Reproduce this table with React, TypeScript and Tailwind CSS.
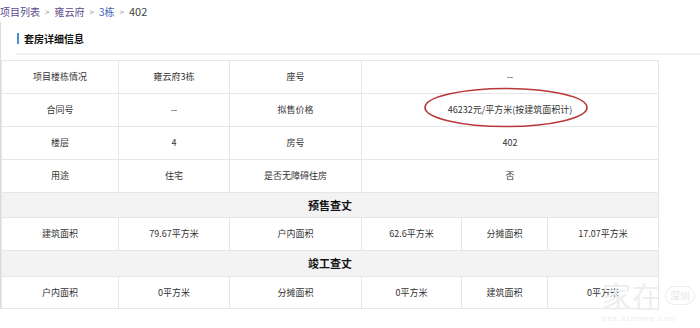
import React from 'react';

const cell = 'border border-[#e6e6e6] text-center align-middle text-[9px] text-[#333] font-normal';
const section = 'border border-[#e6e6e6] bg-[#f3f3f3] text-center align-middle text-[11px] font-bold text-[#111]';

const topRows: [string, string, string, string][] = [
  ['项目楼栋情况', '雍云府3栋', '座号', '--'],
  ['合同号', '--', '拟售价格', '46232元/平方米(按建筑面积计)'],
  ['楼层', '4', '房号', '402'],
  ['用途', '住宅', '是否无障碍住房', '否'],
];

const App: React.FC = () => {
  return (
    <div
      className="w-[700px] h-[328px] bg-white overflow-hidden relative"
      style={{ fontFamily: '"Microsoft YaHei", "Noto Sans CJK SC", "Noto Sans", sans-serif' }}
    >
      {/* breadcrumb */}
      <div className="h-[22px] flex items-center text-[10px] leading-none gap-[5px] pt-[1px]">
        <span className="text-[#5a4a8e]">项目列表</span>
        <span className="text-[#888] text-[8px]">&gt;</span>
        <span className="text-[#5a4a8e]">雍云府</span>
        <span className="text-[#888] text-[8px]">&gt;</span>
        <span className="text-[#3a62b8]">3栋</span>
        <span className="text-[#888] text-[8px]">&gt;</span>
        <span className="text-[#444] text-[11px]">402</span>
      </div>

      <div className="border-l border-[#dcdcdc]">
        <div className="h-[31px] flex items-center pl-[16px] pt-[1px]">
          <span className="w-[2px] h-[11px] bg-[#4a8fd3] mr-[5px]" />
          <span className="text-[10px] font-bold text-[#111]">套房详细信息</span>
        </div>
        <div className="ml-[15px] h-[2px] bg-[#efefef]" />

        <div className="relative mt-[5px] w-[657px]">
          <table className="w-[657px] table-fixed border-collapse">
            <colgroup>
              <col className="w-[117px]" />
              <col className="w-[111px]" />
              <col className="w-[132px]" />
              <col className="w-[100px]" />
              <col className="w-[86px]" />
              <col className="w-[111px]" />
            </colgroup>
            <tbody>
              {topRows.map((r, i) => (
                <tr key={i} className="h-[33px]">
                  <td className={cell}>{r[0]}</td>
                  <td className={cell}>{r[1]}</td>
                  <td className={cell}>{r[2]}</td>
                  <td className={cell} colSpan={3}>{r[3]}</td>
                </tr>
              ))}
              <tr className="h-[25px]">
                <td className={section} colSpan={6}>预售查丈</td>
              </tr>
              <tr className="h-[33px]">
                <td className={cell}>建筑面积</td>
                <td className={cell}>79.67平方米</td>
                <td className={cell}>户内面积</td>
                <td className={cell}>62.6平方米</td>
                <td className={cell}>分摊面积</td>
                <td className={cell}>17.07平方米</td>
              </tr>
              <tr className="h-[26px]">
                <td className={section} colSpan={6}>竣工查丈</td>
              </tr>
              <tr className="h-[32px]">
                <td className={cell}>户内面积</td>
                <td className={cell}>0平方米</td>
                <td className={cell}>分摊面积</td>
                <td className={cell}>0平方米</td>
                <td className={cell}>建筑面积</td>
                <td className={cell}>0平方米</td>
              </tr>
            </tbody>
          </table>

          {/* red hand-drawn ellipse */}
          <svg className="absolute left-[422px] top-[27px] pointer-events-none" width="166" height="42" viewBox="0 0 166 42">
            <ellipse cx="83" cy="20.5" rx="81" ry="19" fill="none" stroke="#b8383a" strokeWidth="1.6" />
          </svg>
        </div>
      </div>

      {/* watermark */}
      <div className="absolute left-[602px] top-[281px] pointer-events-none">
        <div className="flex items-center">
          <span
            className="text-[29px] leading-none text-[#eeeeee] tracking-[1px]"
            style={{ fontFamily: '"Noto Sans CJK SC", sans-serif' }}
          >
            家在
          </span>
          <span className="ml-[3px] px-[4px] h-[19px] flex items-center rounded-full border border-[#ececec] text-[10px] text-[#e6e6e6]">
            深圳
          </span>
        </div>
        <div className="text-[8px] leading-none mt-[5px] text-[#ececec] tracking-[1px]" style={{ fontFamily: '"Liberation Sans", sans-serif' }}>
          bbs.szhome.com
        </div>
      </div>
    </div>
  );
};

export default App;
